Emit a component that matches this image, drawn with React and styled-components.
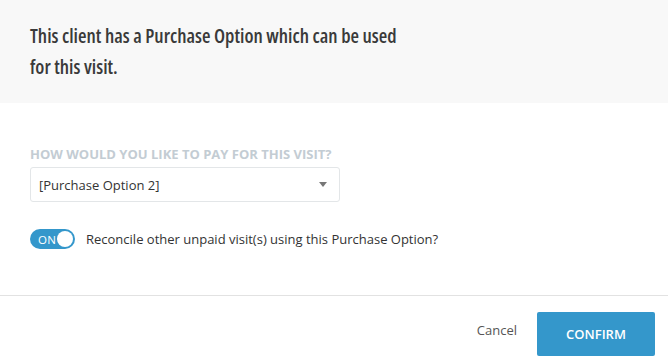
import React from 'react'
import styled, { createGlobalStyle } from 'styled-components'

const Global = createGlobalStyle`
    body {
        margin: 0;
        background: #ffffff;
        font-family: "Open Sans", "Liberation Sans", sans-serif;
    }
`

const Modal = styled.div`
    width: 668px;
    display: flex;
    flex-direction: column;
`

const Header = styled.div`
    background-color: #f8f8f8;
    padding: 20px 30px 21px;
`

const Title = styled.h2`
    margin: 0;
    max-width: 375px;
    font-size: 19.5px;
    font-weight: 600;
    font-stretch: condensed;
    line-height: 31px;
    color: #3a3a3a;
`

const Body = styled.div`
    padding: 42px 30px 46px;
    display: flex;
    flex-direction: column;
`

const Label = styled.label`
    font-size: 13px;
    font-weight: 700;
    color: #c3ccd3;
    text-transform: uppercase;
    margin-bottom: 4px;
`

const Select = styled.div`
    width: 310px;
    height: 35px;
    box-sizing: border-box;
    border: 1px solid #e3e6e8;
    border-radius: 3px;
    display: flex;
    align-items: center;
    justify-content: space-between;
    padding: 0 12px 0 8px;
    font-size: 13px;
    color: #333333;
`

const Caret = styled.span`
    width: 0;
    height: 0;
    border-left: 4px solid transparent;
    border-right: 4px solid transparent;
    border-top: 5px solid #777777;
`

const ToggleRow = styled.div`
    margin-top: 27px;
    display: flex;
    align-items: center;
    gap: 11px;
    font-size: 13px;
    color: #333333;
`

const Toggle = styled.div`
    width: 45px;
    height: 20px;
    border-radius: 10px;
    background-color: ${p => (p.$on ? '#3497cb' : '#cccccc')};
    display: flex;
    align-items: center;
    justify-content: space-between;
    padding: 0 2px 0 8px;
    box-sizing: border-box;
    color: #ffffff;
    font-size: 11.5px;
    letter-spacing: 0.3px;
`

const Knob = styled.span`
    width: 16px;
    height: 16px;
    border-radius: 50%;
    background: #ffffff;
`

const Footer = styled.div`
    border-top: 1px solid #e2e2e2;
    padding: 16px 13px 6px;
    display: flex;
    justify-content: flex-end;
    align-items: center;
    gap: 20px;
`

const Button = styled.button`
    font-family: inherit;
    font-size: 13px;
    border: none;
    border-radius: 2px;
    height: 44px;
    cursor: pointer;
    background-color: ${p => (p.$primary ? '#3497cb' : 'transparent')};
    color: ${p => (p.$primary ? '#ffffff' : '#555555')};
    font-weight: ${p => (p.$primary ? 600 : 400)};
    width: ${p => (p.$primary ? '118px' : 'auto')};
    padding: ${p => (p.$primary ? '0' : '0 0 8px')};
    text-transform: ${p => (p.$primary ? 'uppercase' : 'none')};
`

const App = () => {
  return (
    <>
      <Global />
      <Modal>
        <Header>
          <Title>This client has a Purchase Option which can be used for this visit.</Title>
        </Header>
        <Body>
          <Label>How would you like to pay for this visit?</Label>
          <Select>
            [Purchase Option 2]
            <Caret />
          </Select>
          <ToggleRow>
            <Toggle $on>
              ON
              <Knob />
            </Toggle>
            Reconcile other unpaid visit(s) using this Purchase Option?
          </ToggleRow>
        </Body>
        <Footer>
          <Button>Cancel</Button>
          <Button $primary>Confirm</Button>
        </Footer>
      </Modal>
    </>
  )
}

export default App
